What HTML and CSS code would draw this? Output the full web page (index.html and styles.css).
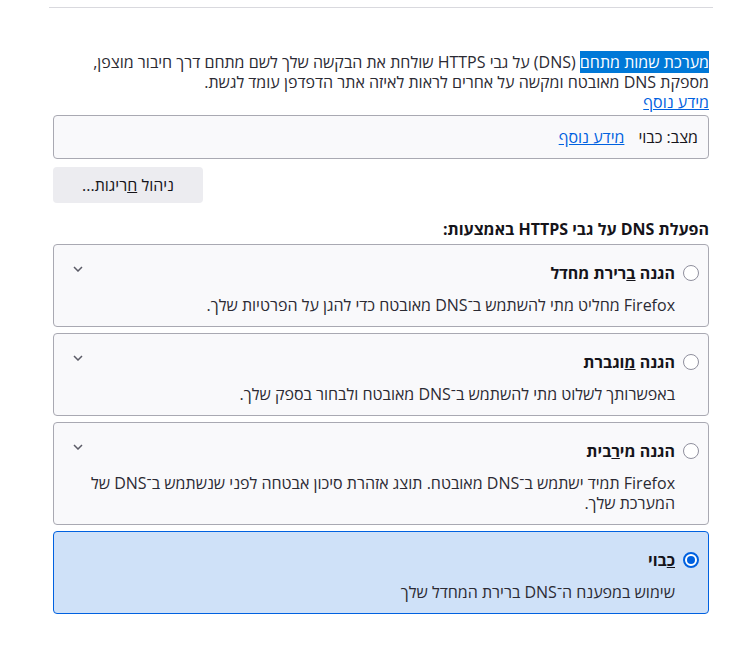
FILE: index.html
```html
<!DOCTYPE html>
<html lang="he" dir="rtl">
<head>
<meta charset="utf-8">
<title>DNS over HTTPS</title>
<link rel="stylesheet" href="styles.css">
</head>
<body>
<div class="page">
  <hr class="sep">
  <section class="doh">
    <p class="intro"><span class="sel">מערכת שמות מתחם</span> (DNS) על גבי HTTPS שולחת את הבקשה שלך לשם מתחם דרך חיבור מוצפן, מספקת DNS מאובטח ומקשה על אחרים לראות לאיזה אתר הדפדפן עומד לגשת.</p>
    <a class="link more" href="#">מידע נוסף</a>
    <div class="status"><span>מצב: כבוי</span><a class="link" href="#">מידע נוסף</a></div>
    <div class="btn-row"><button class="btn">ניהול <u>ח</u>ריגות...</button></div>
    <h2 class="heading">הפעלת DNS על גבי HTTPS באמצעות:</h2>
    <div class="options">
      <div class="card">
        <div class="card-head">
          <span class="radio"></span>
          <span class="title">הגנה <u>ב</u>רירת מחדל</span>
          <svg class="chev" width="10" height="6" viewBox="0 0 10 6"><path d="M1 1l4 4 4-4" fill="none" stroke="#5b5b66" stroke-width="1.5"/></svg>
        </div>
        <p class="desc">Firefox מחליט מתי להשתמש ב־DNS מאובטח כדי להגן על הפרטיות שלך.</p>
      </div>
      <div class="card">
        <div class="card-head">
          <span class="radio"></span>
          <span class="title">הגנה <u>מ</u>וגברת</span>
          <svg class="chev" width="10" height="6" viewBox="0 0 10 6"><path d="M1 1l4 4 4-4" fill="none" stroke="#5b5b66" stroke-width="1.5"/></svg>
        </div>
        <p class="desc">באפשרותך לשלוט מתי להשתמש ב־DNS מאובטח ולבחור בספק שלך.</p>
      </div>
      <div class="card">
        <div class="card-head">
          <span class="radio"></span>
          <span class="title">הגנה מי<u>ר</u>בית</span>
          <svg class="chev" width="10" height="6" viewBox="0 0 10 6"><path d="M1 1l4 4 4-4" fill="none" stroke="#5b5b66" stroke-width="1.5"/></svg>
        </div>
        <p class="desc">Firefox תמיד ישתמש ב־DNS מאובטח. תוצג אזהרת סיכון אבטחה לפני שנשתמש ב־DNS של המערכת שלך.</p>
      </div>
      <div class="card selected">
        <div class="card-head">
          <span class="radio checked"></span>
          <span class="title"><u>כ</u>בוי</span>
        </div>
        <p class="desc">שימוש במפענח ה־DNS ברירת המחדל שלך</p>
      </div>
    </div>
  </section>
</div>
</body>
</html>
```

FILE: styles.css
```css
html, body {
  margin: 0;
  padding: 0;
  background: #ffffff;
}

body {
  font-family: "Open Sans", "Liberation Sans", "DejaVu Sans", sans-serif;
  font-size: 16px;
  line-height: 20px;
  color: #15141a;
}

.page {
  width: 656px;
  margin: 0 27px 0 53px;
}

.sep {
  margin: 7px -4px 0 -4px;
  border: 0;
  height: 1px;
  background: #d9d9de;
}

.doh {
  display: flex;
  flex-direction: column;
}

.intro {
  margin: 44px 0 0 0;
  color: #2b2a33;
}

.sel {
  background: #0078d7;
  color: #ffffff;
}

.link {
  color: #0061e0;
  text-decoration: underline;
}

.more {
  align-self: flex-start;
}

.status {
  margin-top: 3px;
  border: 1px solid #a9a9b2;
  border-radius: 4px;
  background: #f9f9fb;
  padding: 11px 10px;
  display: flex;
  gap: 14px;
}

.btn-row {
  display: flex;
  justify-content: flex-end;
  margin-top: 8px;
}

.btn {
  width: 150px;
  height: 36px;
  border: 0;
  border-radius: 4px;
  background: #ececf0;
  color: #15141a;
  font: inherit;
  padding: 0;
}

.heading {
  margin: 16px 0 5px 0;
  font-size: 16px;
  font-weight: 700;
  line-height: 20px;
}

.options {
  display: flex;
  flex-direction: column;
  gap: 6px;
}

.card {
  border: 1px solid #a9a9b2;
  border-radius: 4px;
  background: #f9f9fb;
  padding: 18px 9px 11px 15px;
}

.card.selected {
  background: #cfe1f8;
  border-color: #0061e0;
}

.card-head {
  display: flex;
  align-items: center;
  gap: 8px;
}

.radio {
  width: 16px;
  height: 16px;
  box-sizing: border-box;
  border: 1.5px solid #8f8f9d;
  border-radius: 50%;
  background: #ffffff;
  flex: none;
  display: flex;
  align-items: center;
  justify-content: center;
}

.radio.checked {
  border: 2px solid #0061e0;
}

.radio.checked::after {
  content: "";
  width: 8px;
  height: 8px;
  border-radius: 50%;
  background: #0061e0;
}

.title {
  font-weight: 700;
}

.chev {
  margin-inline-start: auto;
  margin-top: -8px;
  margin-left: 4px;
}

.desc {
  margin: 12px 24px 0 0;
  color: #2b2a33;
}
```
